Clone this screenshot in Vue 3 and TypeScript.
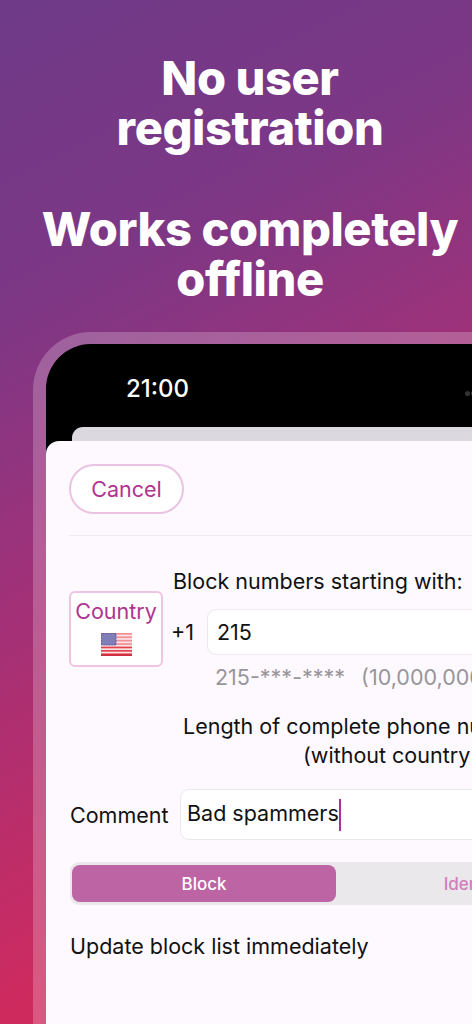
<script setup lang="ts">
const stripes: number[] = [0, 1, 2, 3, 4, 5, 6]
const stripeFill = (s: number): string => (s < 4 ? '#ef8f96' : '#e2434f')
</script>

<template>
  <div class="page">
    <header class="headline">
      <h1>No user<br />registration</h1>
      <h1>Works completely<br />offline</h1>
    </header>

    <div class="device">
      <div class="screen">
        <div class="status">
          <span class="time">21:00</span>
          <span class="sensors"><i></i><i></i></span>
        </div>
        <div class="back-sheet"></div>
        <div class="sheet">
          <div class="nav">
            <button class="cancel">Cancel</button>
          </div>
          <div class="prefix-row">
            <button class="country">
              <span>Country</span>
              <svg class="flag" viewBox="0 0 31 23" width="31" height="23">
                <rect width="31" height="23" fill="#fbe3e5" />
                <rect v-for="s in stripes" :key="s" x="0" :y="s * 3.4" width="31" height="1.7" :fill="stripeFill(s)" />
                <rect x="0" y="21" width="31" height="2" fill="#cf2f3e" />
                <rect x="0.5" y="0.5" width="14.5" height="11.5" fill="#7f7eb8" stroke="#55559b" stroke-width="1" stroke-dasharray="1 0.6" />
              </svg>
            </button>
            <div class="prefix-main">
              <div class="label">Block numbers starting with:</div>
              <div class="code-row">
                <span class="code">+1</span>
                <div class="field number">215</div>
              </div>
              <div class="hint"><span>215-***-****</span><span>(10,000,000 numbers)</span></div>
            </div>
          </div>

          <div class="length">
            <div class="length-a">Length of complete phone number</div>
            <div class="length-b">(without country code)</div>
          </div>

          <div class="comment-row">
            <span class="comment-label">Comment</span>
            <div class="field comment">Bad spammers<i class="caret"></i></div>
          </div>

          <div class="segments">
            <div class="seg active">Block</div>
            <div class="seg second">Identify</div>
          </div>

          <div class="update">Update block list immediately</div>
        </div>
      </div>
    </div>
  </div>
</template>

<style scoped>
.page {
  width: 472px;
  height: 1024px;
  overflow: hidden;
  background: linear-gradient(153deg, #6e3a88 0%, #7d3785 25%, #9c327b 44%, #cf2a5e 81%, #d52858 100%);
  font-family: Inter, "Liberation Sans", sans-serif;
  color: #111;
}
.headline {
  padding: 53px 0 0 28px;
  text-align: center;
  color: #fff;
}
.headline h1 {
  margin: 0 0 50px;
  font-size: 47px;
  line-height: 50.3px;
  font-weight: 800;
  letter-spacing: -0.4px;
  white-space: nowrap;
}
.device {
  margin: -22px 0 0 33px;
  width: 700px;
  height: 900px;
  border: 12px solid rgba(255, 255, 255, 0.22);
  border-left-width: 13px;
  border-radius: 58px;
  background-clip: padding-box;
}
.screen {
  height: 100%;
  background: #000;
  border-radius: 45px 45px 0 0;
  overflow: hidden;
}
.status {
  height: 83px;
  display: flex;
  align-items: center;
  color: #fff;
}
.time {
  margin-left: 80px;
  margin-top: 6px;
  font-size: 24px;
  font-weight: 500;
  width: 339px;
}
.sensors {
  display: flex;
  gap: 1px;
  margin-top: 16px;
}
.sensors i {
  width: 5px;
  height: 5px;
  border-radius: 50%;
  background: #333;
}
.back-sheet {
  height: 14px;
  margin-left: 26px;
  background: #dcd8e0;
  border-radius: 11px 11px 0 0;
}
.sheet {
  background: #fdf9fe;
  border-radius: 13px 13px 0 0;
  padding: 23px 0 0 23px;
  height: 600px;
  font-size: 21.5px;
}
.nav {
  height: 72px;
  border-bottom: 1.5px solid #eee9ef;
  box-sizing: border-box;
}
.cancel {
  display: block;
  width: 115px;
  height: 50px;
  background: #fff;
  border: 2px solid #eac3e2;
  border-radius: 25px;
  color: #b0338f;
  font: inherit;
  padding: 0;
}
.prefix-row {
  display: flex;
  align-items: flex-start;
  margin-top: 33px;
}
.country {
  margin-top: 22px;
  width: 94px;
  height: 76px;
  box-sizing: border-box;
  background: #fff;
  border: 2px solid #eec3e4;
  border-radius: 6px;
  padding: 5px 0 0;
  display: flex;
  flex-direction: column;
  align-items: center;
  gap: 8px;
  font: inherit;
  line-height: 27px;
  color: #b0338f;
}
.flag {
  display: block;
}
.prefix-main {
  margin-left: 8px;
  white-space: nowrap;
}
.label {
  line-height: 27px;
  margin: -1px 0 0 2px;
}
.code-row {
  display: flex;
  align-items: center;
  margin-top: 14px;
}
.code {
  width: 36px;
}
.field {
  background: #fff;
  border: 1px solid #ece8ee;
  border-radius: 9px;
  box-sizing: border-box;
  display: flex;
  align-items: center;
  white-space: nowrap;
}
.number {
  width: 400px;
  height: 46px;
  padding-left: 9px;
}
.hint {
  display: flex;
  gap: 16px;
  margin: 9px 0 0 44px;
  color: #98959b;
  line-height: 27px;
}
.length {
  margin-top: 21px;
  white-space: nowrap;
  line-height: 29px;
}
.length-a {
  margin-left: 114px;
}
.length-b {
  margin-left: 234px;
}
.comment-row {
  display: flex;
  align-items: center;
  margin-top: 19px;
}
.comment-label {
  width: 110px;
  margin-left: 1px;
}
.comment {
  width: 400px;
  height: 51px;
  padding: 0 0 4px 6px;
}
.caret {
  display: inline-block;
  width: 2.5px;
  height: 32px;
  margin-top: 4px;
  background: #b0309a;
}
.segments {
  display: flex;
  width: 537px;
  height: 43px;
  box-sizing: border-box;
  margin: 22px 0 0 1px;
  padding: 3px 2px;
  gap: 2px;
  background: #eae8eb;
  border-radius: 9px;
}
.seg {
  display: flex;
  align-items: center;
  justify-content: center;
  border-radius: 8px;
  font-size: 17px;
  font-weight: 500;
  color: #cf7fbc;
}
.seg.active {
  flex: 0 0 264px;
  background: #bc64a4;
  color: #fff;
}
.seg.second {
  flex: 1;
  padding-left: 6px;
}
.update {
  margin: 27px 0 0 1px;
  line-height: 28px;
}
</style>
